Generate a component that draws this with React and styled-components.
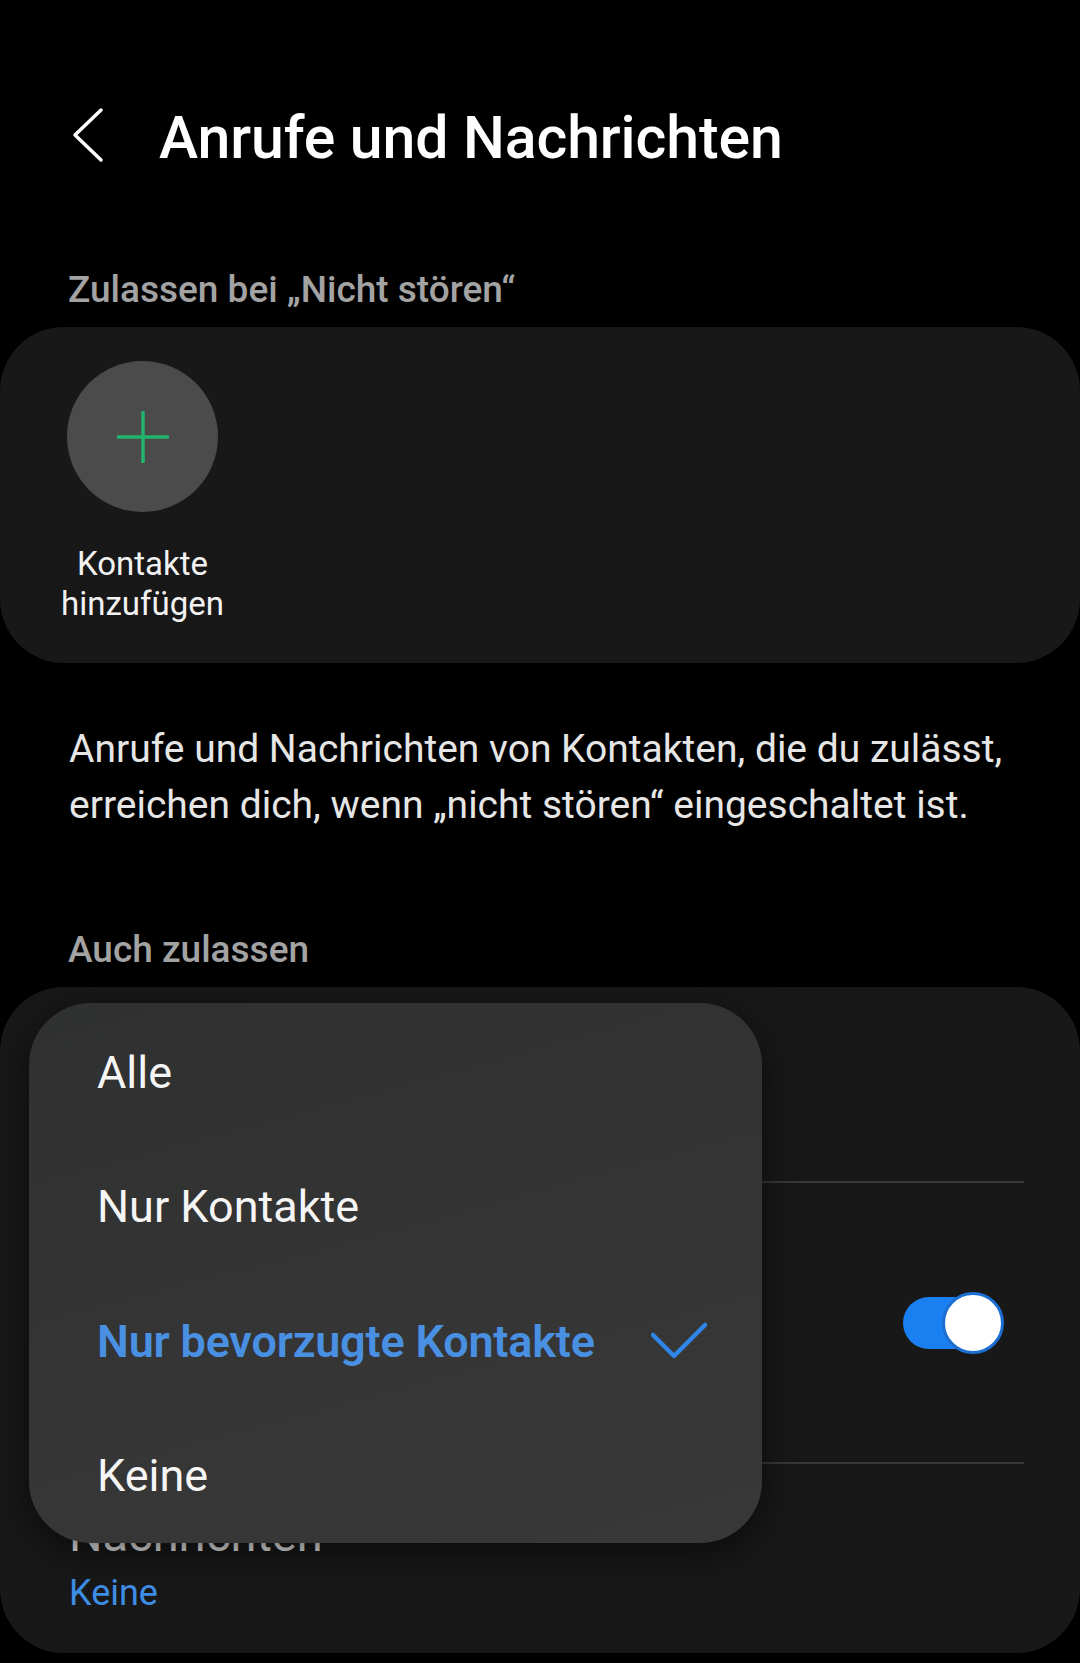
import React from 'react'
import styled, { createGlobalStyle } from 'styled-components'

const GlobalStyle = createGlobalStyle`
  html, body {
    margin: 0;
    padding: 0;
    background: #000;
  }
  body {
    font-family: Roboto, "Noto Sans", "Liberation Sans", sans-serif;
    color: #fff;
  }
`

const options = [
  { label: 'Alle' },
  { label: 'Nur Kontakte' },
  { label: 'Nur bevorzugte Kontakte', selected: true },
  { label: 'Keine' },
]

function BackIcon() {
  return (
    <svg width="32" height="56" viewBox="0 0 32 56" fill="none">
      <path d="M29 3 L3 28 L29 53" stroke="#fff" strokeWidth="3.5" strokeLinecap="round" strokeLinejoin="round" />
    </svg>
  )
}

function PlusIcon() {
  return (
    <svg width="52" height="52" viewBox="0 0 52 52" fill="none">
      <path d="M26 1 V51 M1 26 H51" stroke="#22b46c" strokeWidth="3.5" strokeLinecap="round" />
    </svg>
  )
}

function CheckIcon() {
  return (
    <svg width="56" height="38" viewBox="0 0 56 38" fill="none">
      <path d="M2 13 L23 34 L54 3" stroke="#2f86e6" strokeWidth="4.5" strokeLinecap="round" strokeLinejoin="round" />
    </svg>
  )
}

function App() {
  return (
    <Page>
      <GlobalStyle />
      <Header>
        <BackButton><BackIcon /></BackButton>
        <Title>Anrufe und Nachrichten</Title>
      </Header>

      <SectionLabel top={94}>Zulassen bei „Nicht stören“</SectionLabel>
      <Card>
        <AddContact>
          <Circle><PlusIcon /></Circle>
          <AddLabel>Kontakte<br />hinzufügen</AddLabel>
        </AddContact>
      </Card>

      <Description>
        Anrufe und Nachrichten von Kontakten, die du zulässt,<br />
        erreichen dich, wenn „nicht stören“ eingeschaltet ist.
      </Description>

      <SectionLabel top={95}>Auch zulassen</SectionLabel>
      <CardWrap>
        <ListCard>
          <Row height={194} />
          <Divider />
          <Row height={279}>
            <span />
            <Toggle>
              <Track />
              <Knob />
            </Toggle>
          </Row>
          <Divider />
          <Row height={189} bottom>
            <RowText>
              <RowTitle>Nachrichten</RowTitle>
              <RowValue>Keine</RowValue>
            </RowText>
          </Row>
        </ListCard>

        <Menu>
          {options.map((o) => (
            <MenuItem key={o.label} selected={o.selected}>
              <span>{o.label}</span>
              {o.selected && <CheckIcon />}
            </MenuItem>
          ))}
        </Menu>
      </CardWrap>
    </Page>
  )
}

const Page = styled.div`
  width: 1080px;
  min-height: 1663px;
  background: #000;
  padding-top: 102px;
  box-sizing: border-box;
  overflow: hidden;
`

const Header = styled.div`
  display: flex;
  align-items: center;
  height: 72px;
  padding-left: 72px;
`

const BackButton = styled.div`
  display: flex;
  width: 32px;
  height: 56px;
  margin-bottom: 6px;
  margin-right: 55px;
`

const Title = styled.h1`
  margin: 0;
  font-size: 59px;
  line-height: 72px;
  font-weight: 500;
  letter-spacing: -0.1px;
  color: #fff;
`

const SectionLabel = styled.div`
  margin-top: ${(p) => p.top}px;
  padding: 0 69px 0 68px;
  font-size: 37px;
  line-height: 44px;
  font-weight: 500;
  color: #a3a3a3;
`

const Card = styled.div`
  margin-top: 15px;
  height: 336px;
  box-sizing: border-box;
  background: #181818;
  border-radius: 64px;
  padding: 34px 0 0 67px;
  display: flex;
`

const AddContact = styled.div`
  display: flex;
  flex-direction: column;
  align-items: center;
  width: 151px;
`

const Circle = styled.div`
  width: 151px;
  height: 151px;
  border-radius: 50%;
  background: #4b4b4b;
  display: flex;
  align-items: center;
  justify-content: center;
`

const AddLabel = styled.div`
  margin-top: 32px;
  font-size: 33px;
  line-height: 40px;
  text-align: center;
  white-space: nowrap;
  color: #f2f2f2;
`

const Description = styled.p`
  margin: 58px 0 0;
  padding: 0 30px 0 69px;
  font-size: 39px;
  line-height: 56px;
  color: #e6e6e6;
  white-space: nowrap;
`

const CardWrap = styled.div`
  position: relative;
  margin-top: 15px;
`

const ListCard = styled.div`
  background: #181818;
  border-radius: 64px;
  display: flex;
  flex-direction: column;
`

const Row = styled.div`
  height: ${(p) => p.height}px;
  box-sizing: border-box;
  display: flex;
  align-items: ${(p) => (p.bottom ? 'flex-start' : 'center')};
  justify-content: space-between;
  padding: ${(p) => (p.bottom ? '43px' : '0')} 76px 0 69px;
`

const RowText = styled.div`
  display: flex;
  flex-direction: column;
  gap: 7px;
`

const RowTitle = styled.div`
  font-size: 47px;
  line-height: 56px;
  color: #e6e6e6;
`

const RowValue = styled.div`
  font-size: 36px;
  line-height: 46px;
  color: #3f8ee6;
`

const Divider = styled.div`
  height: 2px;
  margin: 0 56px 0 69px;
  background: #383838;
`

const Toggle = styled.div`
  position: relative;
  width: 101px;
  height: 52px;
  flex-shrink: 0;
`

const Track = styled.div`
  width: 97px;
  height: 52px;
  border-radius: 26px;
  background: #1a7ff0;
`

const Knob = styled.div`
  position: absolute;
  right: 0;
  top: -5px;
  width: 56px;
  height: 56px;
  border-radius: 50%;
  background: #fff;
  border: 3px solid #1c6fd1;
`

const Menu = styled.div`
  position: absolute;
  top: 16px;
  left: 29px;
  width: 733px;
  padding-top: 2px;
  border-radius: 62px;
  background: linear-gradient(165deg, #2f3031 0%, #353535 55%, #383838 100%);
  box-shadow: 0 10px 36px rgba(0, 0, 0, 0.55);
  display: flex;
  flex-direction: column;
  overflow: hidden;
`

const MenuItem = styled.div`
  height: 134.5px;
  display: flex;
  align-items: center;
  justify-content: space-between;
  padding: 0 55px 0 68px;
  font-size: 45px;
  font-weight: ${(p) => (p.selected ? 600 : 400)};
  letter-spacing: ${(p) => (p.selected ? '-0.2px' : '0')};
  color: ${(p) => (p.selected ? '#4a90e2' : '#f5f5f5')};
  white-space: nowrap;
`

export default App
